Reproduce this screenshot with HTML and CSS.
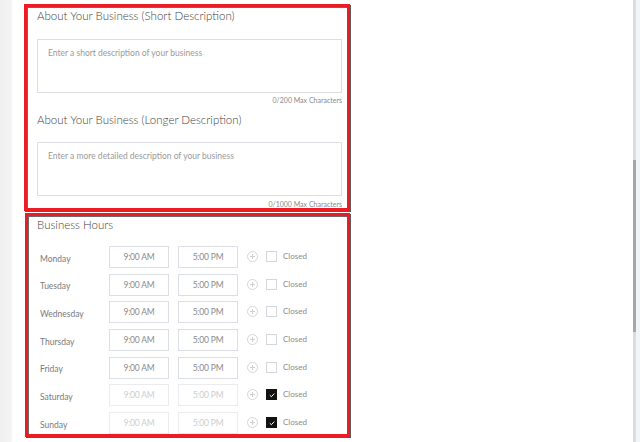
FILE: index.html
```html
<!DOCTYPE html>
<html>
<head>
<meta charset="utf-8">
<link rel="stylesheet" href="styles.css">
</head>
<body>
<div class="page">
  <div class="strip"></div>
  <main class="main">
    <section class="box box-about">
      <h2 class="title">About Your Business (Short Description)</h2>
      <div class="textarea">Enter a short description of your business</div>
      <div class="counter">0/200 Max Characters</div>
      <h2 class="title title-2">About Your Business (Longer Description)</h2>
      <div class="textarea textarea-2">Enter a more detailed description of your business</div>
      <div class="counter counter-2">0/1000 Max Characters</div>
    </section>
    <section class="box box-hours">
      <h2 class="title">Business Hours</h2>
      <div class="rows">
        <div class="row"><span class="day">Monday</span><span class="time">9:00 AM</span><span class="time">5:00 PM</span><span class="plus"></span><span class="check"></span><span class="closed">Closed</span></div>
        <div class="row"><span class="day">Tuesday</span><span class="time">9:00 AM</span><span class="time">5:00 PM</span><span class="plus"></span><span class="check"></span><span class="closed">Closed</span></div>
        <div class="row"><span class="day">Wednesday</span><span class="time">9:00 AM</span><span class="time">5:00 PM</span><span class="plus"></span><span class="check"></span><span class="closed">Closed</span></div>
        <div class="row"><span class="day">Thursday</span><span class="time">9:00 AM</span><span class="time">5:00 PM</span><span class="plus"></span><span class="check"></span><span class="closed">Closed</span></div>
        <div class="row"><span class="day">Friday</span><span class="time">9:00 AM</span><span class="time">5:00 PM</span><span class="plus"></span><span class="check"></span><span class="closed">Closed</span></div>
        <div class="row off"><span class="day">Saturday</span><span class="time">9:00 AM</span><span class="time">5:00 PM</span><span class="plus"></span><span class="check on"><svg viewBox="0 0 10 10" width="10" height="10"><path d="M2.8 5.2 L4.4 6.7 L7.3 3.6" fill="none" stroke="#fff" stroke-width="1"/></svg></span><span class="closed">Closed</span></div>
        <div class="row off"><span class="day">Sunday</span><span class="time">9:00 AM</span><span class="time">5:00 PM</span><span class="plus"></span><span class="check on"><svg viewBox="0 0 10 10" width="10" height="10"><path d="M2.8 5.2 L4.4 6.7 L7.3 3.6" fill="none" stroke="#fff" stroke-width="1"/></svg></span><span class="closed">Closed</span></div>
      </div>
    </section>
  </main>
  <div class="scrollbar"><div class="thumb"></div></div>
</div>
</body>
</html>
```
FILE: styles.css
```css
html, body {
  margin: 0;
  padding: 0;
  background: #fff;
  font-family: Lato, "Open Sans", sans-serif;
}
.page {
  display: flex;
  width: 640px;
  height: 442px;
  overflow: hidden;
}
.strip {
  width: 12px;
  flex: none;
  background: linear-gradient(to right, #f0f0f0, #f3f3f3 80%, #f7f7f7);
}
.main {
  flex: 1;
  padding-left: 12px;
  padding-top: 4px;
}
.box {
  box-sizing: border-box;
  width: 326px;
  border: 3px solid #ec1c24;
  box-shadow: inset 1px 1px 0 #6b6b6b, 1px 1px 0 #5a5a5a;
}
.box-about {
  height: 207px;
  padding: 0 5px 0 10px;
}
.box-hours {
  margin-top: 2px;
  margin-left: 1px;
  width: 325px;
  height: 224px;
  padding: 0 5px 0 9px;
}
.title {
  margin: 0;
  font-size: 11.5px;
  font-weight: 300;
  line-height: 17px;
  color: #3f3f3f;
}
.title-2 {
  margin-top: 6px;
}
.textarea {
  box-sizing: border-box;
  margin-top: 15px;
  height: 54px;
  border: 1px solid #dcdee6;
  padding: 8px 10px;
  font-size: 8.5px;
  line-height: 11px;
  color: #9a9a9a;
}
.textarea-2 {
  margin-top: 14px;
}
.counter {
  margin-top: 2px;
  text-align: right;
  font-size: 7px;
  line-height: 10px;
  color: #8a8a8a;
}
.counter-2 {
  margin-top: 3px;
}
.rows {
  margin-top: 13px;
  display: flex;
  flex-direction: column;
  gap: 5.7px;
}
.row {
  display: flex;
  align-items: center;
  height: 22px;
  padding-left: 3px;
}
.day {
  width: 69px;
  font-size: 8.5px;
  color: #7a7a7a;
  padding-top: 3px;
}
.time {
  box-sizing: border-box;
  width: 60px;
  height: 22px;
  margin-right: 9px;
  border: 1px solid #dcdee6;
  display: flex;
  align-items: center;
  justify-content: center;
  font-size: 8.5px;
  color: #8a8a8a;
  letter-spacing: -0.2px;
}
.off .time {
  border-color: #ececf0;
  color: #cdcdcd;
}
.plus {
  position: relative;
  box-sizing: border-box;
  width: 11px;
  height: 11px;
  border: 1px solid #d6d6d6;
  border-radius: 50%;
  margin-right: 8px;
  margin-top: -1px;
}
.plus::before, .plus::after {
  content: "";
  position: absolute;
  background: #d0d0d0;
}
.plus::before {
  left: 2px; right: 2px; top: 4px; height: 1px;
}
.plus::after {
  top: 2px; bottom: 2px; left: 4px; width: 1px;
}
.check {
  box-sizing: border-box;
  width: 11px;
  height: 11px;
  border: 1px solid #d4d6dc;
  margin-right: 6px;
  margin-top: -1px;
  display: flex;
  align-items: center;
  justify-content: center;
}
.check.on {
  background: #121212;
  border-color: #121212;
}
.check svg {
  display: block;
  flex: none;
}
.closed {
  font-size: 8px;
  color: #8a8a8a;
  margin-top: -2px;
}
.scrollbar {
  flex: none;
  width: 7px;
  background: linear-gradient(to right, #d8dde5 0, #d8dde5 3px, #f3f4f6 3px);
  position: relative;
}
.thumb {
  position: absolute;
  left: 0;
  width: 3px;
  top: 160px;
  height: 172px;
  background: #a3a8ae;
}
```
